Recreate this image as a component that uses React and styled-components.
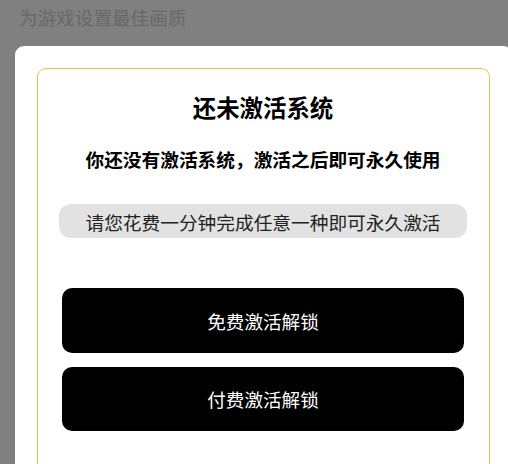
import React from 'react';
import styled, { createGlobalStyle } from 'styled-components';

const GlobalStyle = createGlobalStyle`
  html, body {
    margin: 0;
    padding: 0;
    height: 100%;
    overflow: hidden;
    background-color: #808080;
  }
  body {
    font-family: 'Noto Sans CJK SC', 'Noto Sans', sans-serif;
  }
  #root {
    height: 100%;
  }
`;

const actions = ['免费激活解锁', '付费激活解锁'];

export default function App() {
  return (
    <>
      <GlobalStyle />
      <Page>
        <Hint>为游戏设置最佳画质</Hint>
        <Sheet>
          <Card>
            <Title>还未激活系统</Title>
            <Subtitle>你还没有激活系统，激活之后即可永久使用</Subtitle>
            <Notice>请您花费一分钟完成任意一种即可永久激活</Notice>
            <Actions>
              {actions.map((label) => (
                <ActionButton key={label}>{label}</ActionButton>
              ))}
            </Actions>
          </Card>
        </Sheet>
      </Page>
    </>
  );
}

const Page = styled.div`
  display: flex;
  flex-direction: column;
  height: 100%;
`;

const Hint = styled.div`
  height: 46px;
  padding: 3px 0 0 19px;
  box-sizing: border-box;
  font-size: 18.6px;
  line-height: 27px;
  color: #686868;
`;

const Sheet = styled.div`
  flex: 1;
  margin: 0 -4px 0 15px;
  padding: 22px 22px 0 22px;
  background-color: #fff;
  border-radius: 9px 9px 0 0;
  display: flex;
  flex-direction: column;
`;

const Card = styled.div`
  flex: 1;
  border: 1.5px solid #e4c448;
  border-bottom: none;
  border-radius: 9px 9px 0 0;
  padding: 22px 22px 0 21px;
  display: flex;
  flex-direction: column;
  align-items: center;
`;

const Title = styled.h2`
  margin: 0;
  font-size: 23.4px;
  line-height: 32px;
  font-weight: 700;
  color: #000;
`;

const Subtitle = styled.p`
  margin: 22px 0 0;
  font-size: 18.7px;
  line-height: 27px;
  font-weight: 700;
  color: #000;
`;

const Notice = styled.div`
  margin-top: 32px;
  width: 100%;
  height: 34px;
  box-sizing: border-box;
  background-color: #e2e2e2;
  border-radius: 12px;
  display: flex;
  align-items: center;
  justify-content: center;
  font-size: 18.7px;
  color: #222;
`;

const Actions = styled.div`
  margin-top: 50px;
  width: 100%;
  padding: 0 3px;
  box-sizing: border-box;
  display: flex;
  flex-direction: column;
  gap: 14px;
`;

const ActionButton = styled.button`
  height: 64.5px;
  border: none;
  border-radius: 10px;
  background-color: #000;
  color: #fff;
  font-family: inherit;
  font-size: 18.6px;
  cursor: pointer;
`;
